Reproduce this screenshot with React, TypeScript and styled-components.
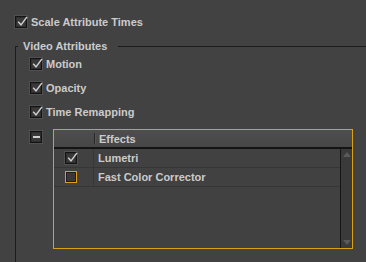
import React from "react";
import styled, { createGlobalStyle } from "styled-components";

const GlobalStyle = createGlobalStyle`
  html, body {
    margin: 0;
    padding: 0;
    background: #424242;
  }
  body {
    font-family: "Liberation Sans", Arial, sans-serif;
    font-size: 11px;
    font-weight: bold;
    color: #cbcbcb;
  }
  * { box-sizing: border-box; }
`;

const Page = styled.div`
  width: 366px;
  height: 262px;
  overflow: hidden;
  padding: 15px 0 0 15px;
  display: flex;
  flex-direction: column;
`;

const CheckRow = styled.label`
  display: flex;
  align-items: center;
  gap: 4px;
  height: 18px;
  line-height: 18px;
  white-space: nowrap;
`;

const TopRow = styled(CheckRow)`
  height: 13px;
`;

const Box = styled.span<{ $focus?: boolean }>`
  position: relative;
  display: inline-block;
  flex: none;
  width: 12px;
  height: 12px;
  background: #393939;
  border: 1px solid ${(p) => (p.$focus ? "#dca012" : "#141414")};
  box-shadow: ${(p) =>
    p.$focus ? "inset 0 0 0 1px #1e1e1e" : "0 0 0 1px #505050, inset 0 0 0 1px #2e2e2e"};
`;

const CheckSvg = styled.svg`
  position: absolute;
  left: 1px;
  top: -1px;
  overflow: visible;
`;

const Checkbox: React.FC<{ checked?: boolean; focus?: boolean }> = ({ checked, focus }) => (
  <Box $focus={focus}>
    {checked && (
      <CheckSvg width="11" height="11" viewBox="0 0 11 11">
        <path d="M1.2 5.8 L4 8.8 L10 0.8" fill="none" stroke="#d2d2d2" strokeWidth="1.4" />
      </CheckSvg>
    )}
  </Box>
);

const Group = styled.fieldset`
  margin: 11px 0 0 0;
  padding: 0;
  min-width: 0;
  flex: 1;
  border: none;
  border-top: 1px solid #1c1c1c;
  border-left: 1px solid #1c1c1c;
`;

const Legend = styled.legend`
  margin-left: 2px;
  padding: 0 11px 0 5px;
  line-height: 15px;
  height: 15px;
  color: #c9ccd0;
`;

const GroupBody = styled.div`
  display: flex;
  flex-direction: column;
  gap: 6px;
  padding: 1px 0 0 14px;
`;

const TableRow = styled.div`
  display: flex;
  align-items: flex-start;
  gap: 11px;
  margin-top: 2px;
`;

const Collapse = styled.span`
  flex: none;
  margin-top: 2px;
  width: 12px;
  height: 12px;
  background: #393939;
  border: 1px solid #141414;
  box-shadow: 0 0 0 1px #505050, inset 0 0 0 1px #2e2e2e;
  display: flex;
  align-items: center;
  justify-content: center;
  &::after {
    content: "";
    width: 7px;
    height: 2px;
    background: #d0d0d0;
  }
`;

const Table = styled.div`
  width: 300px;
  height: 120px;
  border: 1px solid #dca012;
  display: flex;
  flex-direction: column;
  background: #414141;
`;

const Header = styled.div`
  height: 19px;
  flex: none;
  display: flex;
  align-items: center;
  background: linear-gradient(#4e4e4e, #464646);
  border-bottom: 2px solid #141414;
`;

const HeadSpacer = styled.div`
  width: 40px;
  height: 100%;
`;

const HeadSep = styled.div`
  width: 1px;
  height: 11px;
  background: #262626;
  box-shadow: 1px 0 0 #555;
`;

const HeadLabel = styled.div`
  padding-left: 4px;
`;

const Body = styled.div`
  flex: 1;
  display: flex;
  min-height: 0;
`;

const Rows = styled.div`
  flex: 1;
  display: flex;
  flex-direction: column;
`;

const Row = styled.div`
  height: 19px;
  display: flex;
  border-bottom: 1px solid #363636;
`;

const CheckCell = styled.div`
  width: 40px;
  border-right: 1px solid #383838;
  display: flex;
  align-items: center;
  padding-left: 11px;
`;

const NameCell = styled.div`
  padding-left: 4px;
  line-height: 18px;
`;

const Scrollbar = styled.div`
  width: 12px;
  flex: none;
  background: #3a3a3a;
  border-left: 1px solid #161616;
  display: flex;
  flex-direction: column;
  justify-content: space-between;
  align-items: center;
  padding: 3px 0 3px 0;
`;

const Arrow = styled.span<{ $down?: boolean }>`
  width: 0;
  height: 0;
  border-left: 4px solid transparent;
  border-right: 4px solid transparent;
  ${(p) =>
    p.$down ? "border-top: 5px solid #5a5a5a;" : "border-bottom: 5px solid #5a5a5a;"}
`;

const attributes = ["Motion", "Opacity", "Time Remapping"];

const effects = [
  { name: "Lumetri", checked: true, focus: false },
  { name: "Fast Color Corrector", checked: false, focus: true },
];

export default function App() {
  return (
    <>
      <GlobalStyle />
      <Page>
        <TopRow>
          <Checkbox checked />
          Scale Attribute Times
        </TopRow>
        <Group>
          <Legend>Video Attributes</Legend>
          <GroupBody>
            {attributes.map((a) => (
              <CheckRow key={a}>
                <Checkbox checked />
                {a}
              </CheckRow>
            ))}
            <TableRow>
              <Collapse />
              <Table>
                <Header>
                  <HeadSpacer />
                  <HeadSep />
                  <HeadLabel>Effects</HeadLabel>
                </Header>
                <Body>
                  <Rows>
                    {effects.map((e) => (
                      <Row key={e.name}>
                        <CheckCell>
                          <Checkbox checked={e.checked} focus={e.focus} />
                        </CheckCell>
                        <NameCell>{e.name}</NameCell>
                      </Row>
                    ))}
                  </Rows>
                  <Scrollbar>
                    <Arrow />
                    <Arrow $down />
                  </Scrollbar>
                </Body>
              </Table>
            </TableRow>
          </GroupBody>
        </Group>
      </Page>
    </>
  );
}
